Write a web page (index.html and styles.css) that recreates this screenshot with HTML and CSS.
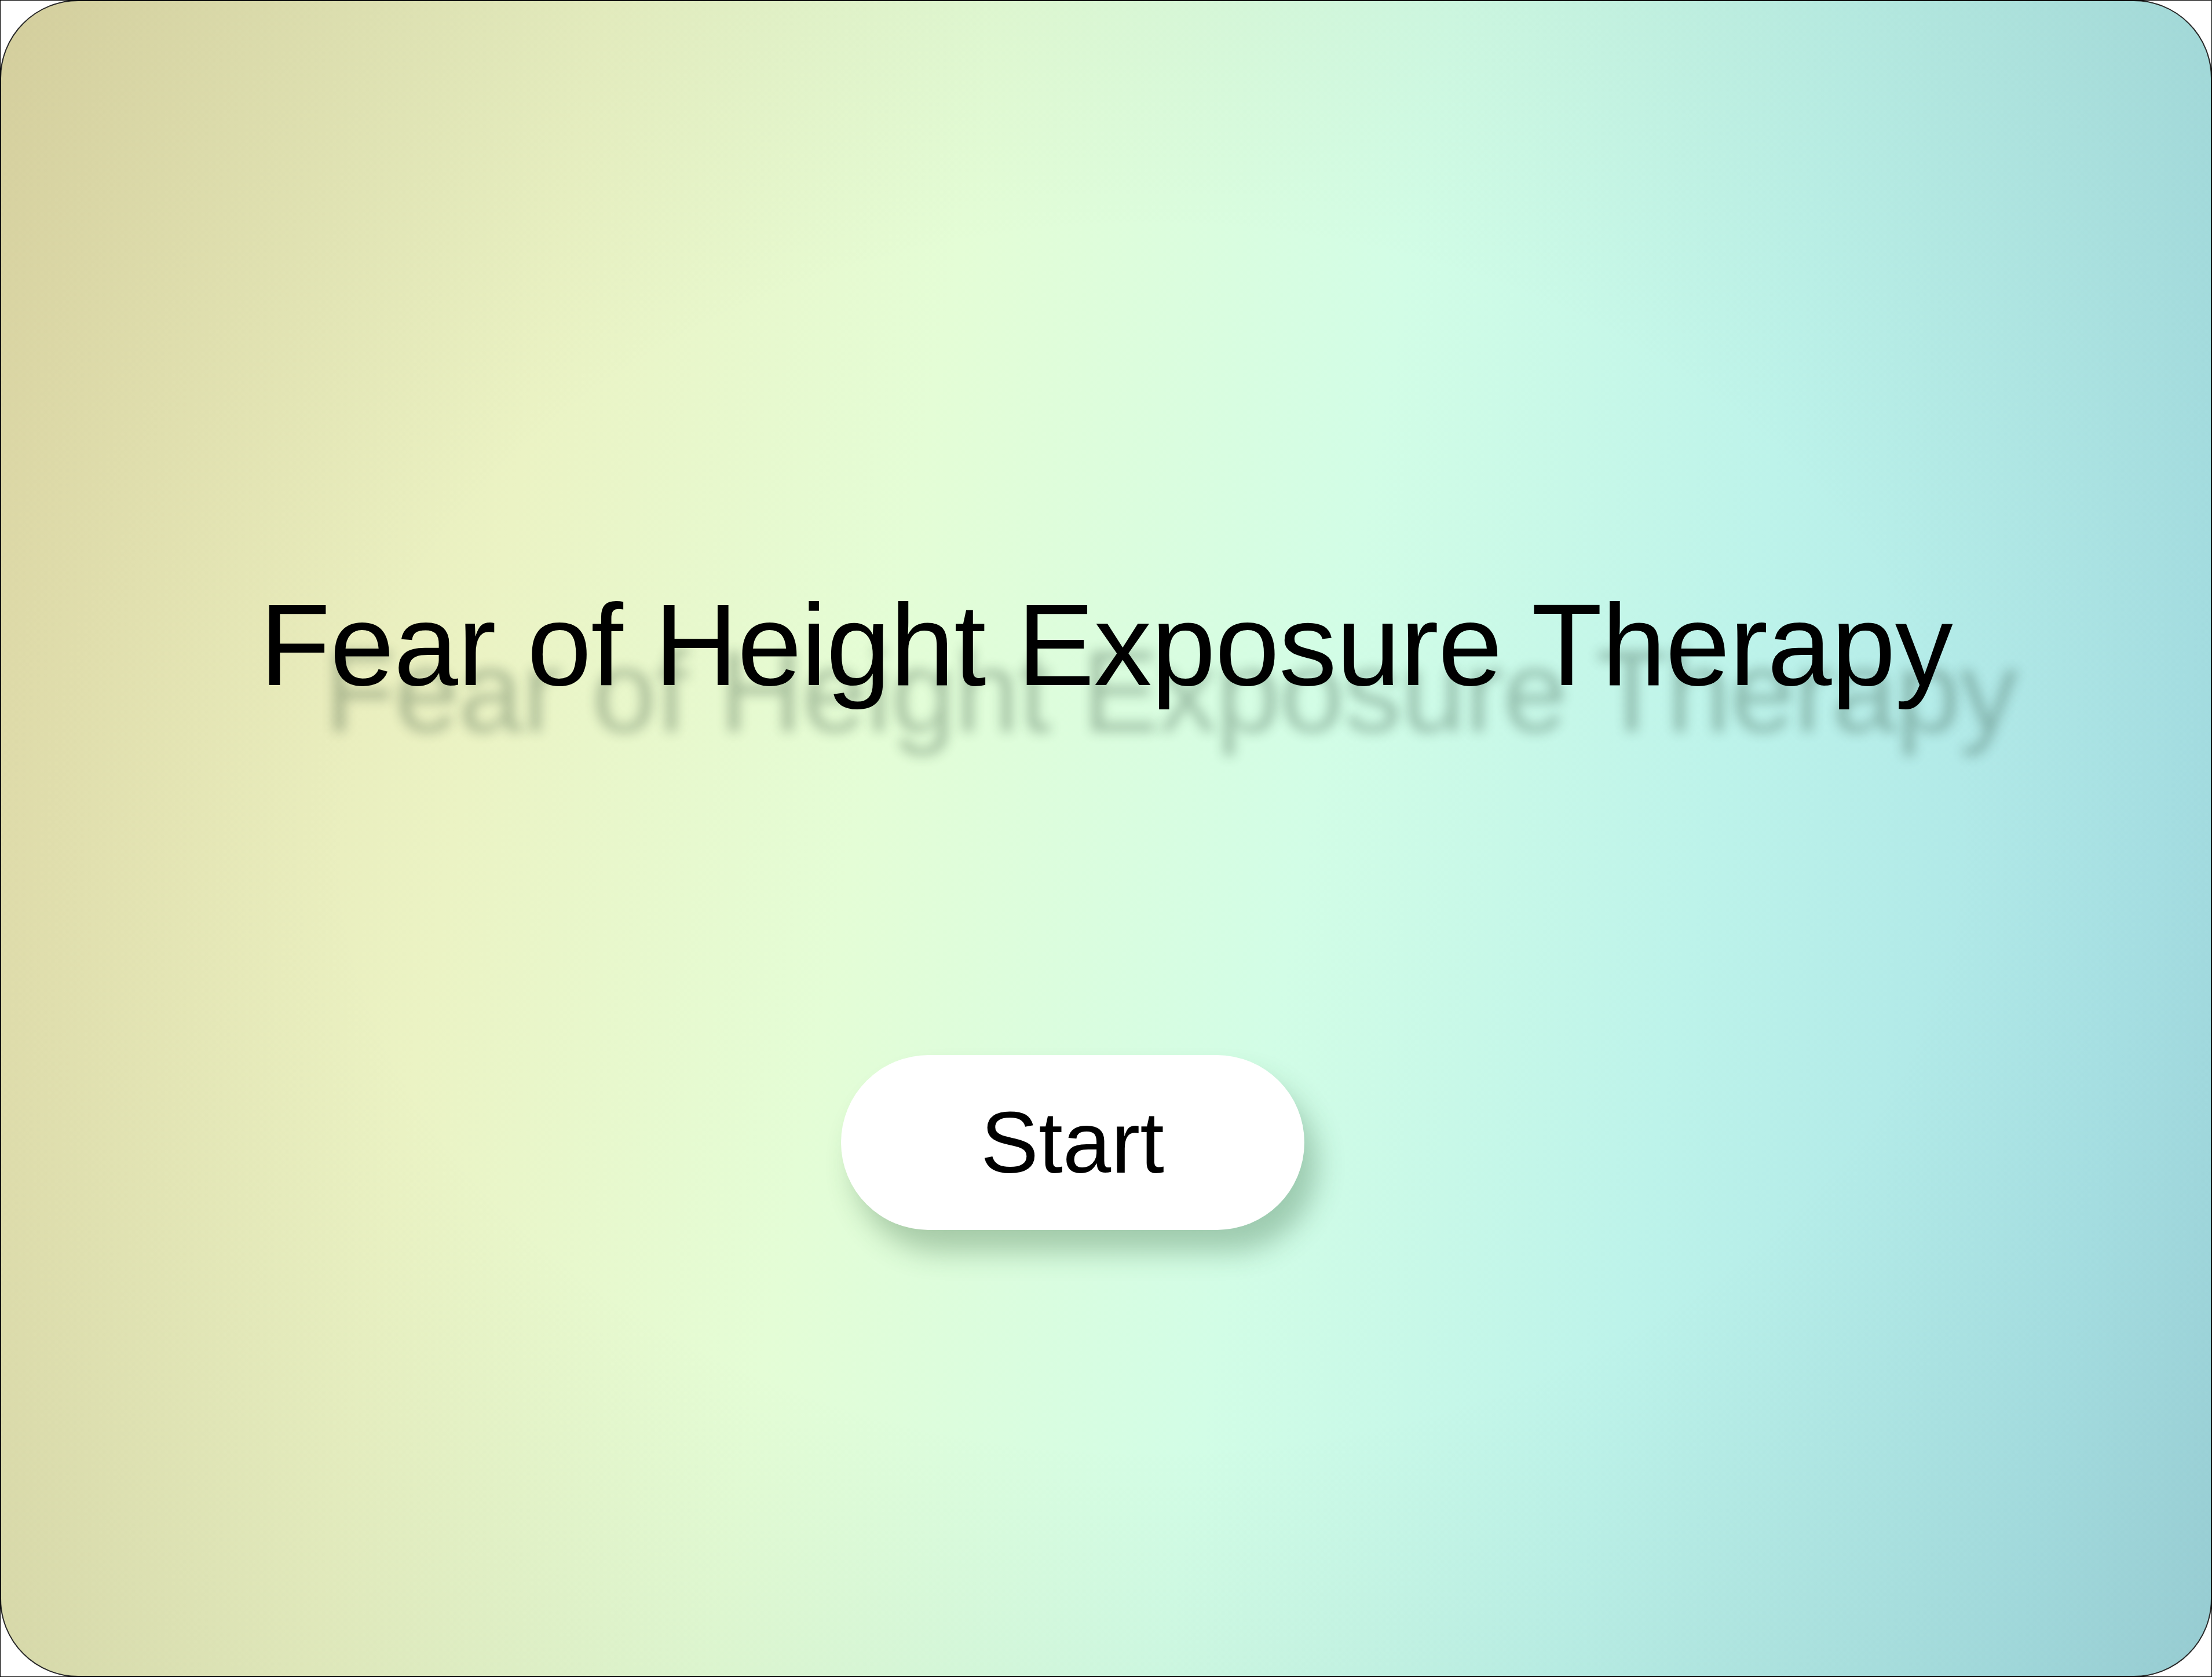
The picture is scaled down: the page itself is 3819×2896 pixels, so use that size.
FILE: index.html
```html
<!DOCTYPE html>
<html lang="en">
<head>
<meta charset="utf-8">
<title>Fear of Height Exposure Therapy</title>
<link rel="stylesheet" href="styles.css">
</head>
<body>
<div class="screen">
  <main class="card">
    <h1 class="title">Fear of Height Exposure Therapy</h1>
    <button class="start" type="button">Start</button>
  </main>
</div>
</body>
</html>
```

FILE: styles.css
```css
html, body {
  margin: 0;
  padding: 0;
  background: #fff;
}

.screen {
  box-sizing: border-box;
  width: 3819px;
  height: 2896px;
  border: 1px solid #000;
  background: #fff;
  overflow: hidden;
}

.card {
  box-sizing: border-box;
  margin: -1px;
  width: calc(100% + 2px);
  height: calc(100% + 2px);
  border: 2px solid #2a2a2a;
  border-radius: 135px;
  background:
    radial-gradient(ellipse 80% 80% at 52% 50%, rgba(255,255,255,0) 45%, rgba(40,60,40,0.11) 100%),
    linear-gradient(100deg, #e4dca8 0%, #ebf3c4 24%, #e4fdd6 40%, #d2fde6 58%, #bdf3ea 74%, #a8e2e6 92%, #a0d8e0 100%);
  display: flex;
  flex-direction: column;
  align-items: center;
  font-family: "Liberation Sans", Arial, sans-serif;
}

.title {
  margin: 992px 0 0;
  font-size: 200px;
  font-weight: 400;
  line-height: 240px;
  color: #000;
  letter-spacing: -1px;
  text-shadow: 112px 80px 20px rgba(30, 60, 40, 0.3);
}

.start {
  margin-top: 588px;
  margin-right: 116px;
  width: 800px;
  height: 302px;
  border: none;
  border-radius: 151px;
  background: #fff;
  font-family: "Liberation Sans", Arial, sans-serif;
  font-size: 150px;
  color: #000;
  padding: 0;
  box-shadow: 22px 38px 48px rgba(40, 90, 50, 0.3);
  cursor: pointer;
}
```
